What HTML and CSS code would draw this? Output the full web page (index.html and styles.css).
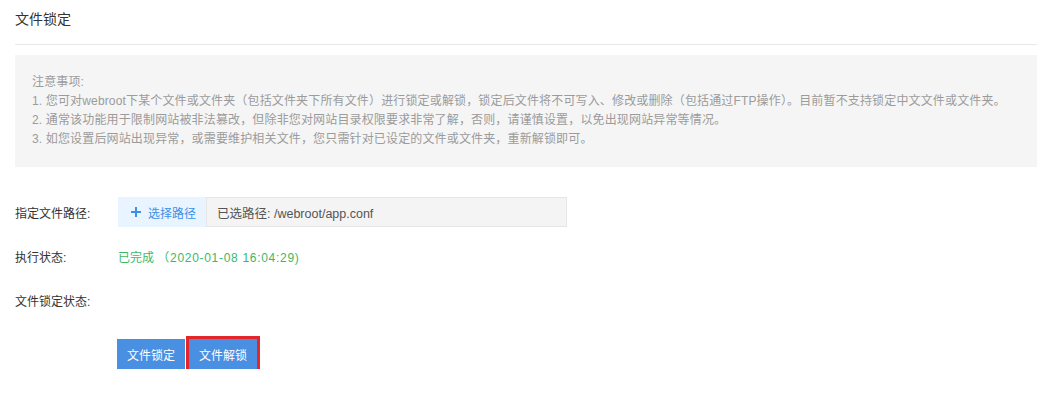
FILE: index.html
```html
<!DOCTYPE html>
<html lang="zh-CN">
<head>
<meta charset="UTF-8">
<title>文件锁定</title>
<link rel="stylesheet" href="styles.css">
</head>
<body>
<div class="page">
  <div class="title">文件锁定</div>

  <div class="notice">
    <p>注意事项:</p>
    <p>1. 您可对webroot下某个文件或文件夹（包括文件夹下所有文件）进行锁定或解锁，锁定后文件将不可写入、修改或删除（包括通过FTP操作）。目前暂不支持锁定中文文件或文件夹。</p>
    <p>2. 通常该功能用于限制网站被非法篡改，但除非您对网站目录权限要求非常了解，否则，请谨慎设置，以免出现网站异常等情况。</p>
    <p>3. 如您设置后网站出现异常，或需要维护相关文件，您只需针对已设定的文件或文件夹，重新解锁即可。</p>
  </div>

  <div class="form">
    <div class="row">
      <div class="label">指定文件路径:</div>
      <div class="path-box">
        <span class="pick">
          <svg width="12" height="12" viewBox="0 0 12 12"><path d="M6 1v10M1 6h10" stroke="#3d8fe6" stroke-width="2"/></svg>
          选择路径
        </span>
        <span class="picked">已选路径: /webroot/app.conf</span>
      </div>
    </div>
    <div class="row">
      <div class="label">执行状态:</div>
      <div class="status">已完成 <span class="time">（2020-01-08 16:04:29)</span></div>
    </div>
    <div class="row">
      <div class="label">文件锁定状态:</div>
    </div>
    <div class="actions">
      <button class="btn">文件锁定</button>
      <button class="btn marked">文件解锁</button>
    </div>
  </div>
</div>
</body>
</html>
```

FILE: styles.css
```css
body {
  margin: 0;
  background: #fff;
  font-family: "Liberation Sans", "Noto Sans CJK SC", sans-serif;
  color: #333;
}
.page {
  padding: 0 13px 0 15px;
}
.title {
  font-size: 14px;
  line-height: 20px;
  padding: 9px 0 15px;
  border-bottom: 1px solid #e8e8e8;
}
.notice {
  margin-top: 10px;
  background: #f5f5f5;
  padding: 18px 16px 18px 17px;
  color: #9b9b9b;
  font-size: 12px;
  line-height: 19px;
  letter-spacing: 0.15px;
}
.notice p {
  margin: 0;
}
.form {
  padding-top: 30px;
}
.row {
  display: flex;
  align-items: center;
  min-height: 30px;
  margin-bottom: 14px;
  font-size: 12px;
}
.label {
  width: 103px;
}
.path-box {
  display: flex;
  height: 30px;
  width: 449px;
}
.pick {
  display: flex;
  align-items: center;
  gap: 6px;
  padding: 0 10px 0 12px;
  background: #e8f4ff;
  color: #3d8fe6;
}
.picked {
  flex: 1;
  display: flex;
  align-items: center;
  padding-left: 10px;
  background: #f4f4f4;
  border: 1px solid #e6e6e6;
  color: #555;
  font-size: 12.5px;
}
.status {
  color: #3db866;
}
.time {
  letter-spacing: 0.7px;
}
.actions {
  display: flex;
  padding: 10px 0 0 102px;
}
.btn {
  font-family: inherit;
  font-size: 12px;
  color: #fff;
  background: #4a90e2;
  border: none;
  height: 30px;
  padding: 0 10px;
  margin: 0;
}
.marked {
  outline: 3px solid #e4262b;
  outline-offset: 0;
  margin-left: 4px;
  width: 68px;
}
```
